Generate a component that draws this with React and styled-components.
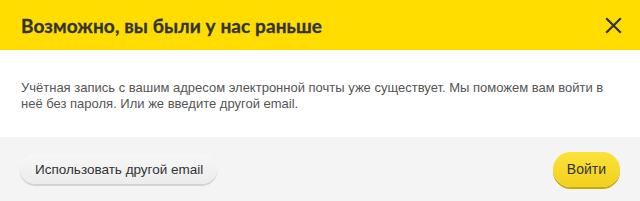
import React from 'react';
import styled, { createGlobalStyle } from 'styled-components';

const GlobalStyle = createGlobalStyle`
  html, body {
    margin: 0;
    padding: 0;
    background: #ffffff;
  }
`;

const Dialog = styled.div`
  width: 640px;
  height: 201px;
  display: flex;
  flex-direction: column;
  font-family: 'Liberation Sans', Arial, sans-serif;
`;

const Header = styled.div`
  height: 50px;
  background: #ffdd00;
  display: flex;
  align-items: center;
  justify-content: space-between;
  padding: 0 18px 0 21px;
  box-sizing: border-box;
`;

const Title = styled.h1`
  margin: 0;
  font-family: 'Lato', sans-serif;
  font-weight: 700;
  font-size: 19px;
  color: #333333;
  letter-spacing: 0.1px;
  -webkit-text-stroke: 0.3px #333333;
`;

const CloseButton = styled.button`
  border: none;
  background: none;
  padding: 0;
  width: 17px;
  height: 17px;
  display: flex;
  cursor: pointer;
`;

const Body = styled.div`
  height: 87px;
  padding: 30px 20px 0 21px;
  box-sizing: border-box;
  font-size: 13px;
  line-height: 16px;
  color: #555555;
`;

const Footer = styled.div`
  flex: 1;
  background: #f4f4f4;
  display: flex;
  align-items: center;
  justify-content: space-between;
  padding: 0 20px 0 20px;
`;

const PillButton = styled.button`
  font-family: 'Liberation Sans', Arial, sans-serif;
  font-size: ${(p) => (p.$primary ? '14px' : '13.5px')};
  color: #333333;
  border: none;
  border-radius: 18px;
  height: ${(p) => (p.$primary ? '35px' : '30px')};
  padding: ${(p) => (p.$primary ? '0 14px' : '0 14px 0 15px')};
  background: ${(p) =>
    p.$primary
      ? 'linear-gradient(#fbe23a, #f2d01e)'
      : 'linear-gradient(#f7f7f7, #ececec)'};
  box-shadow: ${(p) =>
    p.$primary ? '0 2px 0 #c9a80f' : '0 2px 1px #d2d2d2'};
  cursor: pointer;
`;

const CloseIcon = () => (
  <svg width="17" height="17" viewBox="0 0 17 17">
    <path d="M1.2 1.2 L15.8 15.8 M15.8 1.2 L1.2 15.8" stroke="#333333" strokeWidth="2.2" />
  </svg>
);

export default function App() {
  return (
    <>
      <GlobalStyle />
      <Dialog>
        <Header>
          <Title>Возможно, вы были у нас раньше</Title>
          <CloseButton aria-label="Закрыть">
            <CloseIcon />
          </CloseButton>
        </Header>
        <Body>
          Учётная запись с вашим адресом электронной почты уже существует. Мы поможем вам войти в
          неё без пароля. Или же введите другой email.
        </Body>
        <Footer>
          <PillButton>Использовать другой email</PillButton>
          <PillButton $primary>Войти</PillButton>
        </Footer>
      </Dialog>
    </>
  );
}
